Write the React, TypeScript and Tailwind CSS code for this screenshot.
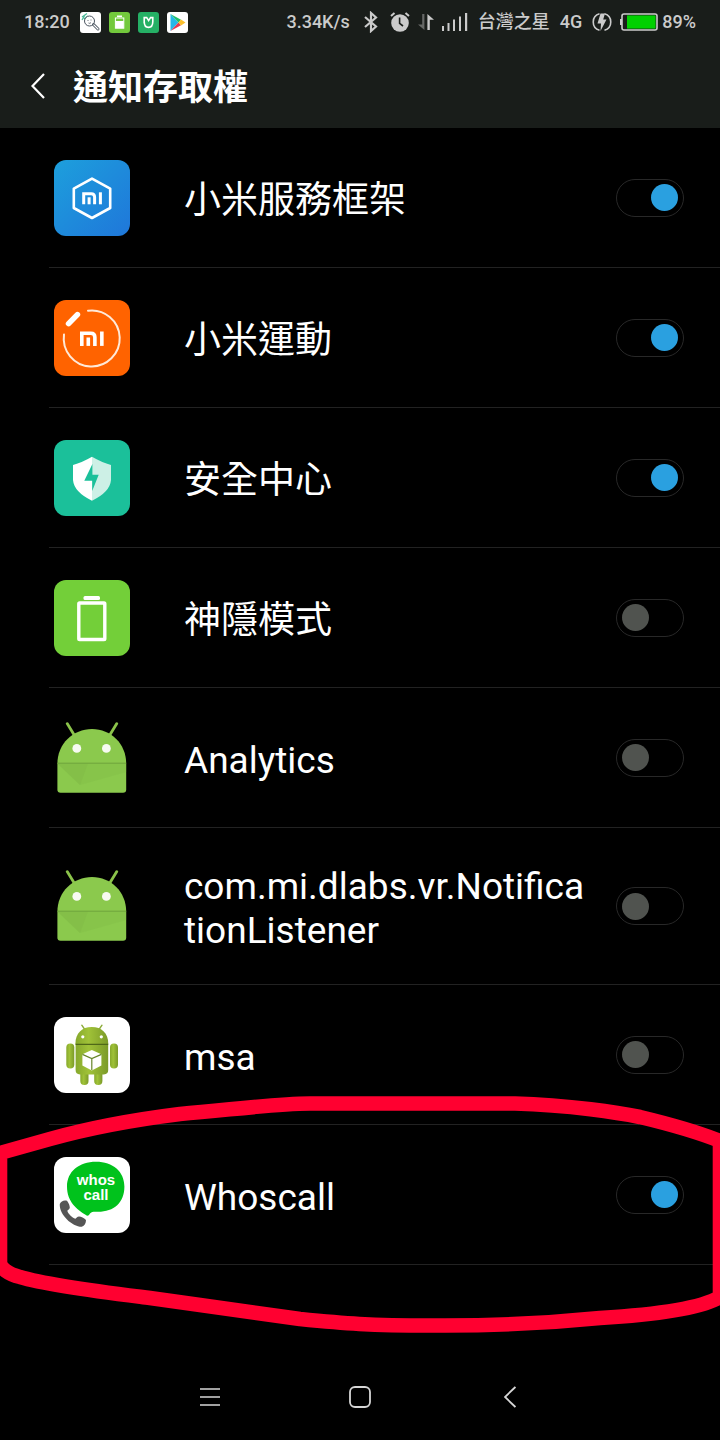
import { useState, type ReactNode } from 'react';

function MiMark() {
  return (
    <g fill="none" stroke="currentColor" strokeWidth="3">
      <path d="M1.5 12V1.5H9Q12.4 1.5 12.4 4.8V12" />
      <path d="M6.9 5V12" />
      <path d="M18.2 0V12" />
    </g>
  );
}

function FrameworkIcon() {
  return (
    <svg viewBox="0 0 76 76" className="size-full text-white">
      <defs>
        <linearGradient id="framework-bg" x1="0" y1="0" x2="1" y2="1">
          <stop offset="0" stopColor="#1d9fdc" />
          <stop offset="1" stopColor="#1f77da" />
        </linearGradient>
      </defs>
      <rect width="76" height="76" rx="12" fill="url(#framework-bg)" />
      <path
        d="M38 18.6L56.2 28.6V48L38 58L19.8 48V28.6Z"
        fill="none"
        stroke="#fff"
        strokeWidth="2.6"
        strokeLinejoin="round"
      />
      <g transform="translate(28.2 32.3)">
        <MiMark />
      </g>
    </svg>
  );
}

function FitIcon() {
  return (
    <svg viewBox="0 0 76 76" className="size-full text-white">
      <rect width="76" height="76" rx="12" fill="#ff6300" />
      <path
        d="M34 10.7A28 28 0 1 1 10 34.5"
        fill="none"
        stroke="#ffe9d8"
        strokeWidth="2"
        strokeLinecap="round"
      />
      <path d="M14.6 23.6L23.4 14.6" stroke="#fff" strokeWidth="5.6" strokeLinecap="round" />
      <g transform="translate(26 31.5) scale(1.2)">
        <MiMark />
      </g>
    </svg>
  );
}

function SecurityIcon() {
  return (
    <svg viewBox="0 0 76 76" className="size-full">
      <rect width="76" height="76" rx="12" fill="#1bc09a" />
      <path d="M38 16.7Q28 22.5 19 25V40Q20 52 38 60.7Z" fill="#fff" />
      <path d="M38 16.7Q48 22.5 57 25V40Q56 52 38 60.7Z" fill="#cdf0e6" />
      <path d="M38.4 24V34.7H44.7L38.2 51V40.7H30.3Z" fill="#1bc09a" />
    </svg>
  );
}

function BatteryIcon() {
  return (
    <svg viewBox="0 0 76 76" className="size-full">
      <rect width="76" height="76" rx="12" fill="#73cf39" />
      <rect x="29.5" y="16" width="16.5" height="4" rx="1.5" fill="#fff" />
      <rect x="24.8" y="23" width="26" height="36.5" rx="0.8" fill="none" stroke="#fff" strokeWidth="3.4" />
    </svg>
  );
}

function AndroidHeadIcon() {
  return (
    <svg viewBox="0 0 76 76" className="size-full">
      <path d="M20.5 15.5L13.2 3.6M55.5 15.5L62.8 3.6" stroke="#8bc34a" strokeWidth="2.8" strokeLinecap="round" />
      <path
        d="M3.4 43.5C3.4 24 19 9 38 9S72.2 24 72.2 43.5V69.5Q72.2 72.8 69 72.8H6.6Q3.4 72.8 3.4 69.5Z"
        fill="#8bc94d"
      />
      <path d="M3.4 43.4H72.2V52L26 65Z" fill="#7fb846" opacity="0.3" />
      <path d="M3.4 43.4H34L26 65Z" fill="#7fb846" opacity="0.4" />
      <path d="M3.4 43.2H72.2" stroke="#6fa33c" strokeWidth="1" />
      <circle cx="22.8" cy="28.4" r="4.4" fill="#f7faf2" />
      <circle cx="52.4" cy="28.4" r="4.4" fill="#f7faf2" />
    </svg>
  );
}

function AndroidBodyIcon() {
  return (
    <svg viewBox="0 0 76 76" className="size-full">
      <defs>
        <linearGradient id="robot" x1="0" y1="0" x2="1" y2="0">
          <stop offset="0" stopColor="#86a82c" />
          <stop offset="0.4" stopColor="#a0c238" />
          <stop offset="1" stopColor="#7b9a28" />
        </linearGradient>
      </defs>
      <rect width="76" height="76" rx="12" fill="#fff" />
      <path d="M27.8 8.2L31.5 13.5M48 8.2L44.3 13.5" stroke="#8cab38" strokeWidth="1.4" strokeLinecap="round" />
      <rect x="26.3" y="50" width="8.2" height="18" rx="4" fill="url(#robot)" />
      <rect x="40.2" y="50" width="8.2" height="18" rx="4" fill="url(#robot)" />
      <rect x="12.3" y="26.5" width="8" height="25" rx="4" fill="url(#robot)" />
      <rect x="56" y="26.5" width="8" height="25" rx="4" fill="url(#robot)" />
      <path d="M21.4 27C21.4 16 28 10 37.8 10S54.3 16 54.3 27Z" fill="url(#robot)" />
      <path d="M21.6 27H54.2V53Q54.2 57.4 49.8 57.4H26Q21.6 57.4 21.6 53Z" fill="url(#robot)" />
      <path d="M21.6 27.4H54.2" stroke="#4f6818" strokeWidth="1.4" />
      <circle cx="28.8" cy="19.8" r="1.6" fill="#fff" />
      <circle cx="47.3" cy="19.8" r="1.6" fill="#fff" />
      <path d="M37.8 33L47.4 37.2V48.4L37.8 53.6L28.4 48.4V37.2Z" fill="#fff" />
      <path d="M28.4 37.4L37.8 41.6L47.4 37.4M37.8 41.6V53" fill="none" stroke="#67862a" strokeWidth="1.2" />
    </svg>
  );
}

function WhoscallIcon() {
  return (
    <svg viewBox="0 0 76 76" className="size-full">
      <rect width="76" height="76" rx="12" fill="#fff" />
      <path
        d="M42 4.7C59 4.7 70.4 14.5 70.4 29.5C70.4 45.5 60 54.8 44 54.8C39 54.8 38.5 54.5 36 56.5C34.5 59 33.5 59.2 31.5 57.8C23 52.5 13 45 13 29.5C13 14.5 25 4.7 42 4.7Z"
        fill="#00c21c"
      />
      <g
        fill="#fff"
        textAnchor="middle"
        className="font-['Liberation_Sans',sans-serif] text-[15px] font-bold"
      >
        <text x="42" y="28">whos</text>
        <text x="42" y="43">call</text>
      </g>
      <path
        d="M5.8 47C7 43.8 10.4 42.8 13 43.8C15 46.4 15.8 48.6 15.8 51C15 52.6 13.9 53 13.3 53.8C14.2 57 18 60.6 21.4 61.8C22.8 60.6 23.2 59.8 25 59.6C27.4 59.8 29.8 61 32 63C32 66.2 30.6 69 27.8 69.8C18 69.8 5 57.4 5.8 47Z"
        fill="#555"
      />
    </svg>
  );
}

type App = { id: string; name: string; icon: ReactNode; enabled: boolean; marked?: boolean };

const apps: App[] = [
  { id: 'framework', name: '小米服務框架', icon: <FrameworkIcon />, enabled: true },
  { id: 'fit', name: '小米運動', icon: <FitIcon />, enabled: true },
  { id: 'security', name: '安全中心', icon: <SecurityIcon />, enabled: true },
  { id: 'power', name: '神隱模式', icon: <BatteryIcon />, enabled: false },
  { id: 'analytics', name: 'Analytics', icon: <AndroidHeadIcon />, enabled: false },
  { id: 'vr', name: 'com.mi.dlabs.vr.NotificationListener', icon: <AndroidHeadIcon />, enabled: false },
  { id: 'msa', name: 'msa', icon: <AndroidBodyIcon />, enabled: false },
  { id: 'whoscall', name: 'Whoscall', icon: <WhoscallIcon />, enabled: true, marked: true },
];

function StatusBar() {
  return (
    <div className="flex h-11 items-center justify-between pr-6 pl-6 text-lg font-medium whitespace-nowrap text-[#cbcbcb]">
      <div className="flex items-center gap-2">
        <span className="mr-0.5">18:20</span>
        <svg viewBox="0 0 21 21" className="size-[21px]">
          <rect width="21" height="21" rx="3" fill="#fff" />
          <path d="M2 5L7 1.5M2 8L5 3M4 7L8 4" stroke="#4dbb9a" strokeWidth="1.3" />
          <circle cx="9.5" cy="9" r="5" fill="#fff" stroke="#4b5560" strokeWidth="1" />
          <path d="M8 8V9M11 7.5V8.5M8.5 11Q10 12 11 10.5" fill="none" stroke="#4b5560" strokeWidth="0.8" />
          <path d="M13.5 12.5L18 17" stroke="#4b5560" strokeWidth="3" strokeLinecap="round" />
          <path d="M13.8 12.8L18 17" stroke="#fff" strokeWidth="1.2" strokeLinecap="round" />
        </svg>
        <svg viewBox="0 0 21 21" className="size-[21px]">
          <rect width="21" height="21" rx="3" fill="#73c93c" />
          <rect x="8" y="3.5" width="5" height="1.6" fill="#fff" />
          <rect x="6.4" y="6" width="8.4" height="10.2" fill="none" stroke="#fff" strokeWidth="1" />
          <rect x="6.5" y="9" width="8.2" height="7.2" fill="#fff" />
        </svg>
        <svg viewBox="0 0 21 21" className="size-[21px]">
          <rect width="21" height="21" rx="3" fill="#25b065" />
          <path
            d="M9.2 5.6H6.2V11M6.2 9.5Q6.2 15.4 10.5 15.4T14.8 9.5V5.6H12.6L10.6 8.6L8.8 5.6"
            fill="none"
            stroke="#fff"
            strokeWidth="1.6"
          />
        </svg>
        <svg viewBox="0 0 21 21" className="size-[21px]">
          <rect width="21" height="21" rx="3" fill="#fff" />
          <path d="M3.5 2L11.5 10.5L3.5 19Z" fill="#25b8e8" />
          <path d="M3.5 2L14 7.8L11.5 10.5Z" fill="#20bf6b" />
          <path d="M3.5 19L14 13.2L11.5 10.5Z" fill="#e8384f" />
          <path d="M14 7.6L18.5 10.5L14 13.4L11.3 10.5Z" fill="#fbc02d" />
        </svg>
      </div>

      <div className="flex items-center">
        <span>3.34K/s</span>
        <svg viewBox="0 0 14 22" className="ml-3.5 h-[22px] w-3.5" fill="none" stroke="currentColor" strokeWidth="2.2">
          <path d="M1 6L12 15.5L7 20V2L12 6.5L1 16" />
        </svg>
        <svg viewBox="0 0 20 20" className="ml-3 size-5">
          <circle cx="10" cy="11" r="8.8" fill="currentColor" />
          <path d="M1 4L4.5 1M19 4L15.5 1" stroke="currentColor" strokeWidth="2" />
          <path d="M9.6 5.5V11.3L13 14" fill="none" stroke="#191d1a" strokeWidth="1.6" />
        </svg>
        <svg viewBox="0 0 16 16" className="ml-2 size-4">
          <path d="M4.2 0H6.4V16L0 10.5H4.2Z" fill="#666866" />
          <path d="M9.4 16V0L16 5.8H11.8V16Z" fill="currentColor" />
        </svg>
        <svg viewBox="0 0 26 18" className="ml-2 h-[18px] w-[26px]" fill="currentColor">
          <rect x="0" y="13" width="2" height="5" />
          <rect x="5.5" y="10" width="2" height="8" />
          <rect x="11" y="6.5" width="2" height="11.5" />
          <rect x="17" y="3.5" width="2" height="14.5" />
          <rect x="23" y="0" width="2.2" height="18" />
        </svg>
        <span className="ml-2.5">台灣之星</span>
        <span className="ml-2.5">4G</span>
        <svg viewBox="0 0 20 20" className="ml-2.5 size-5">
          <path
            d="M7.5 1.8A8.5 8.5 0 0 0 7.5 18.2M12.5 1.8A8.5 8.5 0 0 1 12.5 18.2"
            fill="none"
            stroke="currentColor"
            strokeWidth="1.6"
          />
          <path d="M8.5 1.5H13L11.2 7.5H14.5L8.5 19L9 11.5H5.5Z" fill="currentColor" />
        </svg>
        <svg viewBox="0 0 38 18" className="ml-2 h-[18px] w-[38px]">
          <rect x="0" y="6" width="2" height="6" fill="currentColor" />
          <rect x="2" y="1" width="35" height="16" rx="2" fill="#191d1a" stroke="currentColor" strokeWidth="1.6" />
          <rect x="7" y="2.4" width="28.6" height="13.2" fill="#00d000" />
        </svg>
        <span className="ml-1">89%</span>
      </div>
    </div>
  );
}

function AppRow({ app }: { app: App }) {
  const [enabled, setEnabled] = useState(app.enabled);

  return (
    <li className="relative pl-[49px]">
      <div className="flex min-h-[140px] items-center border-b border-[#222] pr-9 pl-[5px]">
        <div className="size-[76px] shrink-0">{app.icon}</div>
        <label
          htmlFor={app.id}
          className="mr-6 ml-[54px] min-w-0 flex-1 pt-[37px] pb-[31px] text-[37px] leading-[44px] break-all text-white"
        >
          {app.name}
        </label>
        <input
          id={app.id}
          type="checkbox"
          role="switch"
          checked={enabled}
          onChange={(e) => setEnabled(e.target.checked)}
          className="flex h-[38px] w-[68px] shrink-0 appearance-none items-center rounded-full border border-[#282828] px-[5px] before:size-[27px] before:rounded-full before:bg-[#50534f] checked:justify-end checked:before:bg-[#2aa0e0]"
        />
      </div>
      {app.marked && (
        <svg
          viewBox="0 0 720 240"
          preserveAspectRatio="none"
          className="pointer-events-none absolute -top-[29px] left-0 h-[240px] w-full"
          fill="none"
          stroke="#ff0030"
          strokeWidth="14.6"
          strokeLinejoin="round"
        >
          <path d="M0 57L50 43C100 29 140 23 180 18C230 14 270 8 310 7.5H515C570 9 620 17 640 21C665 27 700 37 720 45V201C700 213 650 219 600 222C550 227 500 229.5 445 229.5C370 230 340 227 300 223L200 209L150 202C110 197 50 190 20 181C8 178 0 172 0 166Z" />
        </svg>
      )}
    </li>
  );
}

export default function App() {
  return (
    <div className="flex min-h-screen flex-col overflow-hidden bg-black font-['Roboto','Noto_Sans_CJK_TC',sans-serif]">
      <header className="bg-[#191d1a]">
        <StatusBar />
        <div className="flex h-21 items-center pl-6">
          <button type="button" aria-label="返回" className="flex size-7 items-center justify-center text-white">
            <svg viewBox="0 0 14 26" className="h-[26px] w-3.5" fill="none" stroke="currentColor" strokeWidth="2.2">
              <path d="M13 1L1.5 13L13 25" />
            </svg>
          </button>
          <h1 className="ml-[21px] pt-1.5 text-[35px] leading-[44px] font-bold text-white">通知存取權</h1>
        </div>
      </header>

      <main>
        <ul>
          {apps.map((app) => (
            <AppRow key={app.id} app={app} />
          ))}
        </ul>
      </main>

      <nav className="mt-auto flex h-[86px] items-center justify-center gap-[102px] text-[#d6d6d6]">
        <button type="button" aria-label="選單" className="flex size-12 items-center justify-center">
          <svg viewBox="0 0 20 20" className="size-5" stroke="currentColor" strokeWidth="1.6">
            <path d="M0 2H20M0 10H20M0 18H20" />
          </svg>
        </button>
        <button type="button" aria-label="主畫面" className="flex size-12 items-center justify-center">
          <svg viewBox="0 0 22 22" className="size-[22px]" fill="none" stroke="currentColor" strokeWidth="1.8">
            <rect x="1" y="1" width="20" height="20" rx="5" />
          </svg>
        </button>
        <button type="button" aria-label="返回上一頁" className="flex size-12 items-center justify-center">
          <svg viewBox="0 0 12 22" className="h-[22px] w-3" fill="none" stroke="currentColor" strokeWidth="1.8">
            <path d="M11.4 1L1 11L11.4 21" />
          </svg>
        </button>
      </nav>
    </div>
  );
}
